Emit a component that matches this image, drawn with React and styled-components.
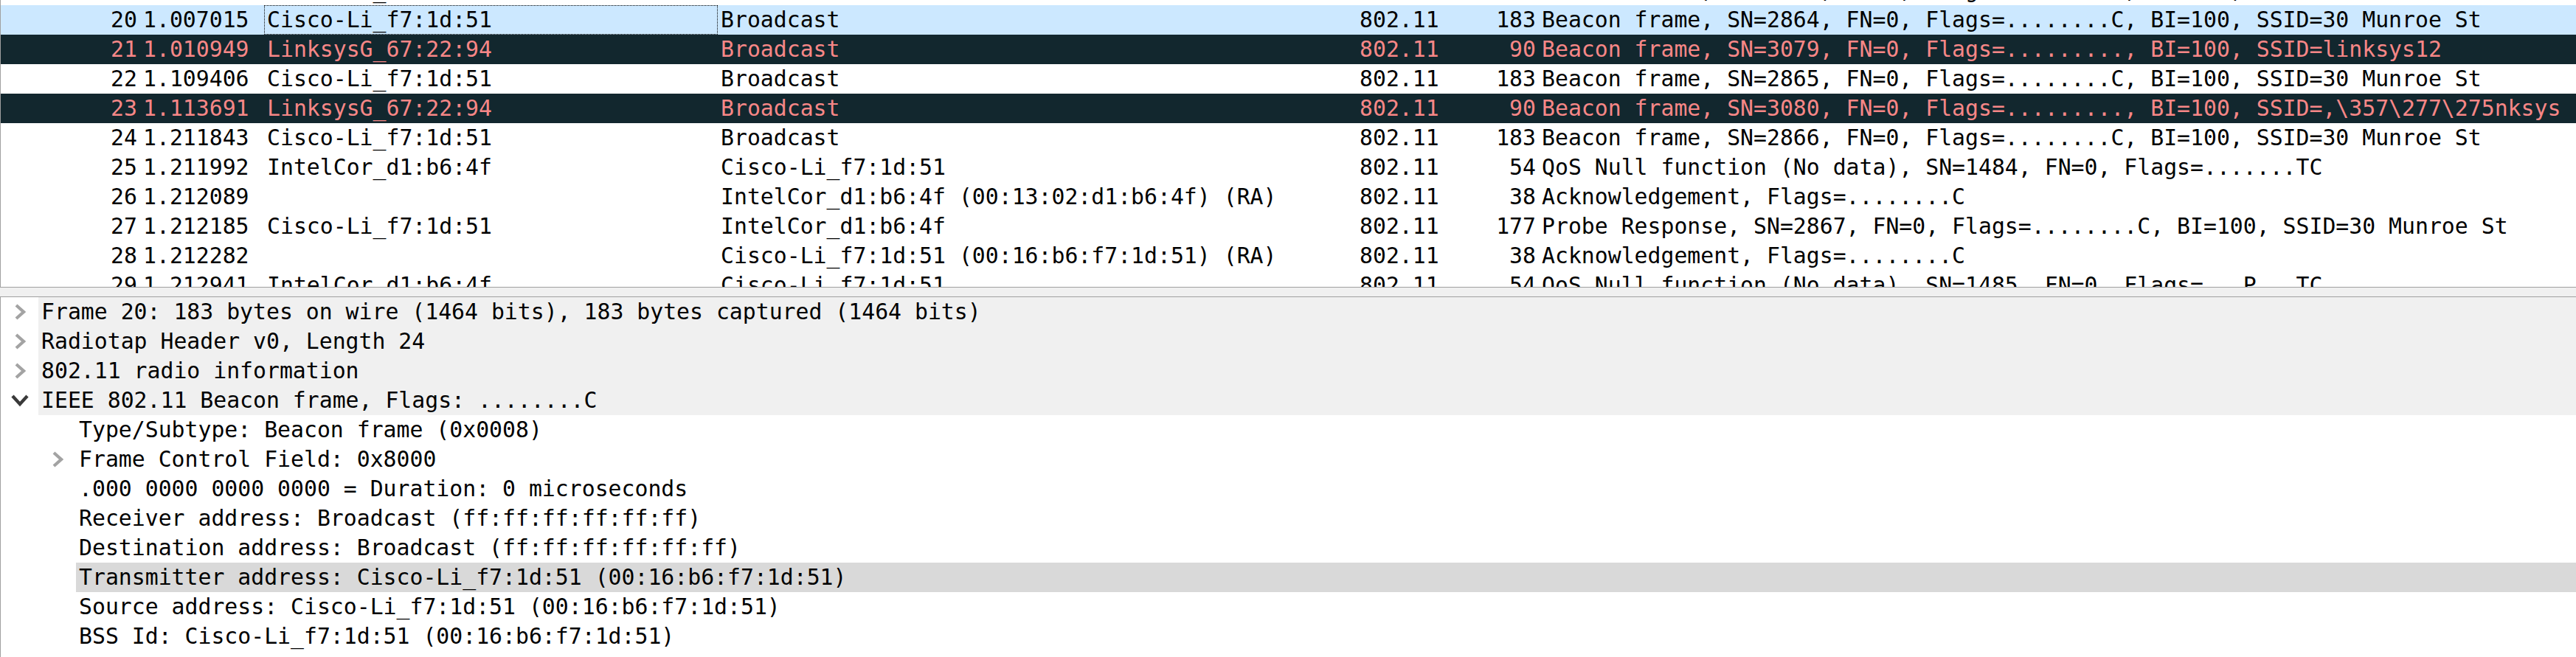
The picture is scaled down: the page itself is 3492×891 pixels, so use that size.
import React from "react";
import styled, { createGlobalStyle } from "styled-components";

const GlobalStyle = createGlobalStyle`
  html, body {
    margin: 0;
    padding: 0;
    background: #fff;
    overflow: hidden;
  }
  body {
    font-family: "DejaVu Sans Mono", "Liberation Mono", monospace;
    font-size: 29.8px;
    color: #000;
  }
`;

const Window = styled.div`
  width: 3492px;
  height: 891px;
  display: flex;
  flex-direction: column;
  background: #f0f0f0;
  overflow: hidden;
`;

const PacketList = styled.div`
  flex: none;
  height: 389px;
  overflow: hidden;
  background: #fff;
  border-left: 1px solid #a0a0a0;
  border-bottom: 1px solid #a0a0a0;
`;

// list is scrolled: row 19 only shows its last few pixels
const Scrolled = styled.div`
  margin-top: -33px;
`;

const Row = styled.div`
  display: grid;
  grid-template-columns: 189px 168px 615px 866px 150px 97px 1fr;
  height: 40px;
  line-height: 40px;
  white-space: nowrap;
  background: ${(p) =>
    p.$tone === "selected" ? "#cce8ff" : p.$tone === "bad" ? "#12272e" : "#fff"};
  color: ${(p) => (p.$tone === "bad" ? "#f78787" : "#000")};
`;

const Cell = styled.div`
  padding: 0 4px;
  overflow: hidden;
  text-align: ${(p) => (p.$right ? "right" : "left")};
  ${(p) => p.$focus && "outline: 1px dotted #000; outline-offset: -1px;"}
`;

const Splitter = styled.div`
  flex: none;
  height: 12px;
  background: #f0f0f0;
`;

const Details = styled.div`
  flex: 1;
  background: #fff;
  border-left: 1px solid #a0a0a0;
  border-top: 1px solid #a0a0a0;
  overflow: hidden;
`;

const TreeRow = styled.div`
  display: flex;
  height: 40px;
  line-height: 40px;
  white-space: nowrap;
  padding-left: ${(p) => p.$level * 51}px;
`;

const Toggle = styled.div`
  flex: none;
  width: 51px;
  display: flex;
  align-items: center;
  justify-content: center;
`;

const Label = styled.div`
  flex: 1;
  padding-left: 4px;
  background: ${(p) => (p.$hl ? "#d9d9d9" : p.$level === 0 ? "#f0f0f0" : "transparent")};
`;

const Closed = () => (
  <svg width="16" height="22" viewBox="0 0 16 22">
    <path d="M3 2 L13 11 L3 20" fill="none" stroke="#a3a3a3" strokeWidth="4.2" />
  </svg>
);

const Open = () => (
  <svg width="24" height="18" viewBox="0 0 24 18">
    <path d="M2 3 L12 14 L22 3" fill="none" stroke="#3a3a3a" strokeWidth="4.4" />
  </svg>
);

const packets = [
  ["19", "0.904620", "Cisco-Li_f7:1d:51", "Broadcast", "802.11", "183", "Beacon frame, SN=2863, FN=0, Flags=........C, BI=100, SSID=30 Munroe St"],
  ["20", "1.007015", "Cisco-Li_f7:1d:51", "Broadcast", "802.11", "183", "Beacon frame, SN=2864, FN=0, Flags=........C, BI=100, SSID=30 Munroe St", "selected"],
  ["21", "1.010949", "LinksysG_67:22:94", "Broadcast", "802.11", "90", "Beacon frame, SN=3079, FN=0, Flags=........., BI=100, SSID=linksys12", "bad"],
  ["22", "1.109406", "Cisco-Li_f7:1d:51", "Broadcast", "802.11", "183", "Beacon frame, SN=2865, FN=0, Flags=........C, BI=100, SSID=30 Munroe St"],
  ["23", "1.113691", "LinksysG_67:22:94", "Broadcast", "802.11", "90", "Beacon frame, SN=3080, FN=0, Flags=........., BI=100, SSID=,\\357\\277\\275nksys", "bad"],
  ["24", "1.211843", "Cisco-Li_f7:1d:51", "Broadcast", "802.11", "183", "Beacon frame, SN=2866, FN=0, Flags=........C, BI=100, SSID=30 Munroe St"],
  ["25", "1.211992", "IntelCor_d1:b6:4f", "Cisco-Li_f7:1d:51", "802.11", "54", "QoS Null function (No data), SN=1484, FN=0, Flags=.......TC"],
  ["26", "1.212089", "", "IntelCor_d1:b6:4f (00:13:02:d1:b6:4f) (RA)", "802.11", "38", "Acknowledgement, Flags=........C"],
  ["27", "1.212185", "Cisco-Li_f7:1d:51", "IntelCor_d1:b6:4f", "802.11", "177", "Probe Response, SN=2867, FN=0, Flags=........C, BI=100, SSID=30 Munroe St"],
  ["28", "1.212282", "", "Cisco-Li_f7:1d:51 (00:16:b6:f7:1d:51) (RA)", "802.11", "38", "Acknowledgement, Flags=........C"],
  ["29", "1.212941", "IntelCor_d1:b6:4f", "Cisco-Li_f7:1d:51", "802.11", "54", "QoS Null function (No data), SN=1485, FN=0, Flags=...P...TC"],
];

const tree = [
  { level: 0, state: "closed", text: "Frame 20: 183 bytes on wire (1464 bits), 183 bytes captured (1464 bits)" },
  { level: 0, state: "closed", text: "Radiotap Header v0, Length 24" },
  { level: 0, state: "closed", text: "802.11 radio information" },
  { level: 0, state: "open", text: "IEEE 802.11 Beacon frame, Flags: ........C" },
  { level: 1, text: "Type/Subtype: Beacon frame (0x0008)" },
  { level: 1, state: "closed", text: "Frame Control Field: 0x8000" },
  { level: 1, text: ".000 0000 0000 0000 = Duration: 0 microseconds" },
  { level: 1, text: "Receiver address: Broadcast (ff:ff:ff:ff:ff:ff)" },
  { level: 1, text: "Destination address: Broadcast (ff:ff:ff:ff:ff:ff)" },
  { level: 1, hl: true, text: "Transmitter address: Cisco-Li_f7:1d:51 (00:16:b6:f7:1d:51)" },
  { level: 1, text: "Source address: Cisco-Li_f7:1d:51 (00:16:b6:f7:1d:51)" },
  { level: 1, text: "BSS Id: Cisco-Li_f7:1d:51 (00:16:b6:f7:1d:51)" },
];

export default function App() {
  return (
    <Window>
      <GlobalStyle />
      <PacketList>
        <Scrolled>
          {packets.map(([no, time, src, dst, proto, len, info, tone]) => (
            <Row key={no} $tone={tone}>
              <Cell $right>{no}</Cell>
              <Cell>{time}</Cell>
              <Cell $focus={tone === "selected"}>{src}</Cell>
              <Cell>{dst}</Cell>
              <Cell>{proto}</Cell>
              <Cell $right>{len}</Cell>
              <Cell>{info}</Cell>
            </Row>
          ))}
        </Scrolled>
      </PacketList>
      <Splitter />
      <Details>
        {tree.map((item, i) => (
          <TreeRow key={i} $level={item.level}>
            <Toggle>
              {item.state === "closed" && <Closed />}
              {item.state === "open" && <Open />}
            </Toggle>
            <Label $level={item.level} $hl={item.hl}>
              {item.text}
            </Label>
          </TreeRow>
        ))}
      </Details>
    </Window>
  );
}
